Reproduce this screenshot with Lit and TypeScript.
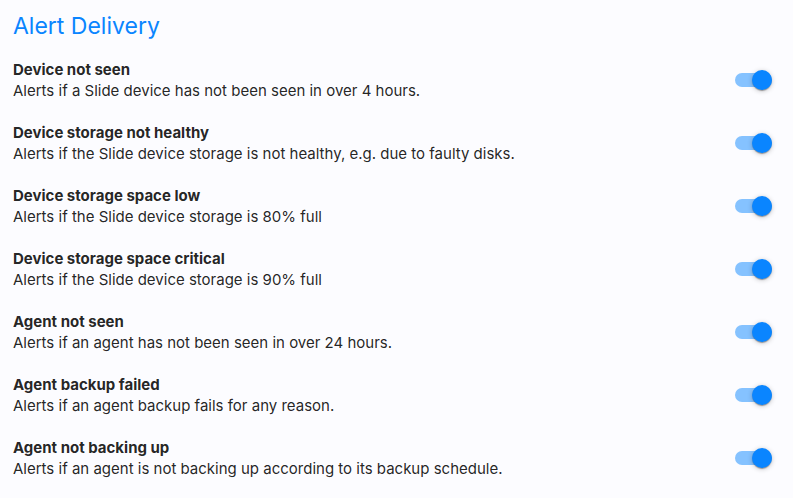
import { LitElement, html, css } from "lit";
import { customElement, state } from "lit/decorators.js";

interface Alert {
  id: string;
  title: string;
  text: string;
  on: boolean;
}

@customElement("app-root")
export class AppRoot extends LitElement {
  @state() private alerts: Alert[] = [
    { id: "device-seen", title: "Device not seen", text: "Alerts if a Slide device has not been seen in over 4 hours.", on: true },
    { id: "storage-health", title: "Device storage not healthy", text: "Alerts if the Slide device storage is not healthy, e.g. due to faulty disks.", on: true },
    { id: "storage-low", title: "Device storage space low", text: "Alerts if the Slide device storage is 80% full", on: true },
    { id: "storage-critical", title: "Device storage space critical", text: "Alerts if the Slide device storage is 90% full", on: true },
    { id: "agent-seen", title: "Agent not seen", text: "Alerts if an agent has not been seen in over 24 hours.", on: true },
    { id: "backup-failed", title: "Agent backup failed", text: "Alerts if an agent backup fails for any reason.", on: true },
    { id: "not-backing-up", title: "Agent not backing up", text: "Alerts if an agent is not backing up according to its backup schedule.", on: true },
  ];

  static styles = css`
    :host {
      display: block;
      box-sizing: border-box;
      min-height: 100vh;
      padding: 10px 13px 19px;
      background: #fcfcff;
      color: rgba(0, 0, 0, 0.87);
      font: 400 15px/21px Inter, "Liberation Sans", sans-serif;
    }
    .heading {
      margin: 0 0 17px;
      color: #0a85ff;
      font-size: 23px;
      line-height: 32px;
      font-weight: 400;
    }
    .list {
      display: grid;
      gap: 21px;
    }
    .row {
      display: flex;
      align-items: center;
      justify-content: space-between;
      gap: 16px;
      padding-right: 8px;
    }
    .title {
      display: block;
      font-weight: 700;
    }
    .text {
      margin: 0;
    }
    .switch {
      appearance: none;
      flex: none;
      display: flex;
      align-items: center;
      width: 37px;
      height: 14px;
      margin: 0;
      border-radius: 7px;
      background: rgba(0, 0, 0, 0.38);
      cursor: pointer;
    }
    .switch::before {
      content: "";
      width: 20px;
      height: 20px;
      flex: none;
      border-radius: 50%;
      background: #fafafa;
      box-shadow: 0 2px 1px -1px rgba(0, 0, 0, 0.2), 0 1px 1px rgba(0, 0, 0, 0.14), 0 1px 5px rgba(0, 0, 0, 0.24);
    }
    .switch:checked {
      justify-content: flex-end;
      background: #85c2ff;
    }
    .switch:checked::before {
      background: #0a85ff;
    }
  `;

  private toggle(id: string) {
    this.alerts = this.alerts.map((a) => (a.id === id ? { ...a, on: !a.on } : a));
  }

  render() {
    return html`
      <h1 class="heading">Alert Delivery</h1>
      <div class="list">
        ${this.alerts.map(
          (a) => html`
            <div class="row">
              <div>
                <label class="title" for=${a.id}>${a.title}</label>
                <p class="text" id="${a.id}-text">${a.text}</p>
              </div>
              <input
                class="switch"
                type="checkbox"
                role="switch"
                id=${a.id}
                aria-describedby="${a.id}-text"
                .checked=${a.on}
                @change=${() => this.toggle(a.id)}
              />
            </div>
          `
        )}
      </div>
    `;
  }
}
